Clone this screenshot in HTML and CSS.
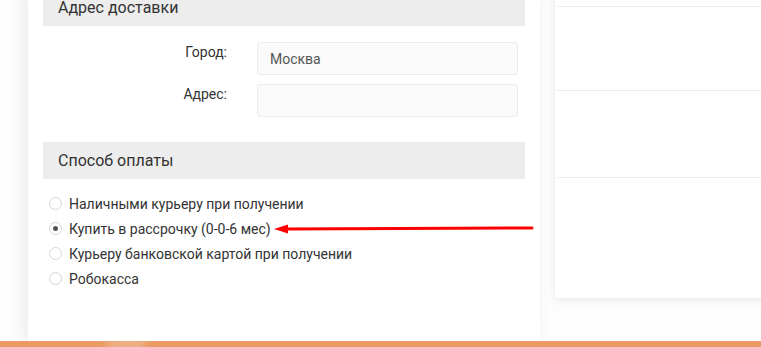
FILE: index.html
```html
<!DOCTYPE html>
<html lang="ru">
<head>
    <meta charset="UTF-8">
    <meta name="viewport" content="width=device-width, initial-scale=1.0">
    <title>Оформление заказа</title>
    <link rel="stylesheet" href="styles.css">
</head>
<body>
    <div class="page">
        <div class="checkout">
            <div class="section-title">Адрес доставки</div>
            <div class="fields">
                <label for="city">Город:</label>
                <input type="text" id="city" value="Москва">
                <label for="address">Адрес:</label>
                <input type="text" id="address">
            </div>

            <div class="section-title">Способ оплаты</div>
            <div class="payments">
                <label class="pay"><input type="radio" name="pay"> Наличными курьеру при получении</label>
                <label class="pay"><input type="radio" name="pay" checked> Купить в рассрочку (0-0-6 мес)</label>
                <label class="pay"><input type="radio" name="pay"> Курьеру банковской картой при получении</label>
                <label class="pay"><input type="radio" name="pay"> Робокасса</label>
            </div>
        </div>

        <div class="summary">
            <div class="summary-row first"></div>
            <div class="summary-row"></div>
            <div class="summary-row"></div>
            <div class="summary-row last"></div>
        </div>
    </div>

    <div class="footer"><span class="footer-mark"></span></div>

    <svg class="arrow" width="264" height="14" viewBox="0 0 264 14">
        <path d="M14 7 L260 6" stroke="#f00" stroke-width="3" stroke-linecap="round" fill="none"/>
        <path d="M2 7 L16 2.5 L16 11.5 Z" fill="#f00"/>
    </svg>
</body>
</html>
```

FILE: styles.css
```css
body {
    margin: 0;
    background: #fdfdfd;
    font-family: Roboto, "Liberation Sans", Arial, sans-serif;
    color: #333;
    overflow: hidden;
    position: relative;
    height: 347px;
}
.page {
    display: flex;
    align-items: flex-start;
    padding-left: 28px;
    margin-top: -11px;
    height: 352px;
}
.checkout {
    width: 482px;
    height: 352px;
    padding: 0 15px;
    background: #fff;
    box-shadow: -4px 0 16px rgba(0, 0, 0, 0.08);
    flex-shrink: 0;
}
.section-title {
    height: 37px;
    line-height: 37px;
    padding-left: 15px;
    background: #ededed;
    font-size: 16px;
    color: #333;
}
.fields {
    display: grid;
    grid-template-columns: 184px 261px;
    column-gap: 30px;
    row-gap: 9px;
    padding: 16px 0 25px;
}
.fields label {
    text-align: right;
    padding-top: 1px;
    font-size: 14px;
    line-height: 18px;
    color: #333;
}
.fields input {
    box-sizing: border-box;
    width: 100%;
    height: 33px;
    padding: 0 12px;
    background: #fafafa;
    border: 1px solid #ececec;
    border-radius: 3px;
    font-family: inherit;
    font-size: 14px;
    color: #555;
}
.payments {
    padding: 12px 0 0 6px;
}
.pay {
    display: flex;
    align-items: center;
    gap: 7px;
    height: 25px;
    font-size: 14px;
    color: #333;
}
.pay input {
    appearance: none;
    margin: 0;
    width: 13px;
    height: 13px;
    border: 1px solid #d6d6d6;
    border-radius: 50%;
    background: #fff;
    position: relative;
    flex-shrink: 0;
}
.pay input:checked::after {
    content: "";
    position: absolute;
    left: 3px;
    top: 3px;
    width: 5px;
    height: 5px;
    border-radius: 50%;
    background: #555;
}
.summary {
    width: 230px;
    margin-left: 15px;
    background: #fff;
    border-radius: 0 0 0 3px;
    box-shadow: 0 2px 10px rgba(0, 0, 0, 0.09);
    flex-shrink: 0;
}
.summary-row {
    height: 83px;
    margin-left: 2px;
    border-bottom: 1px solid #ebebeb;
}
.summary-row.first {
    height: 17px;
}
.summary-row:nth-child(3) {
    height: 86px;
}
.summary-row.last {
    height: 120px;
    border-bottom: 0;
}
.footer {
    position: absolute;
    left: 0;
    right: 0;
    top: 341px;
    height: 6px;
    background: #e89b63;
    overflow: hidden;
}
.footer-mark {
    position: absolute;
    left: 100px;
    top: 0;
    width: 50px;
    height: 6px;
    background: linear-gradient(100deg, rgba(255, 255, 255, 0) 0%, rgba(255, 255, 255, 0.2) 30%, rgba(255, 255, 255, 0.2) 80%, rgba(255, 255, 255, 0) 100%);
}
.arrow {
    position: absolute;
    left: 272px;
    top: 222px;
}
```
